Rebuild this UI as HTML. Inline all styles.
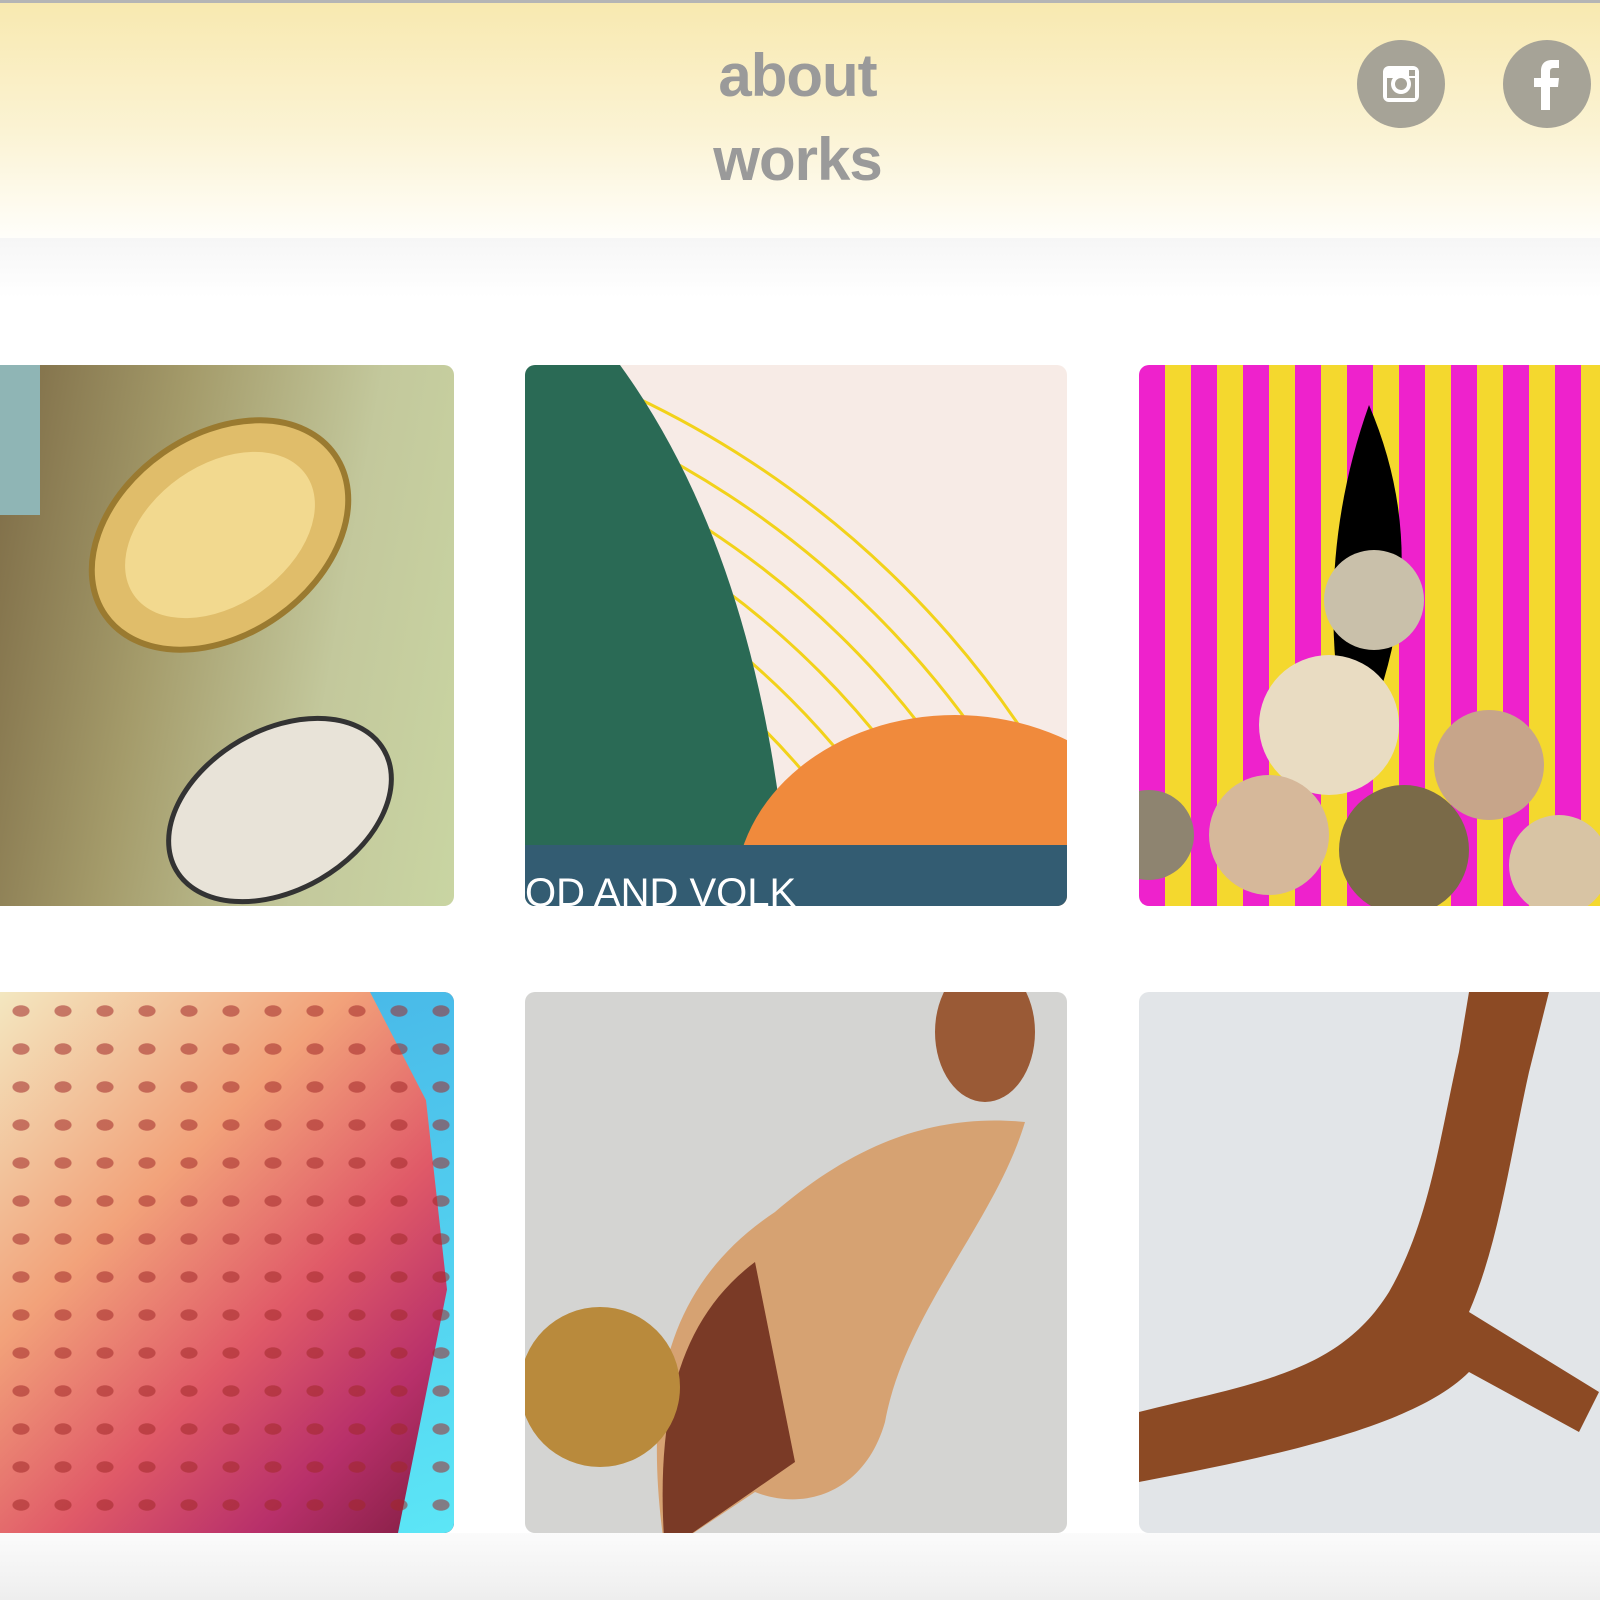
<!DOCTYPE html>
<html><head><meta charset="utf-8"><style>
*{margin:0;padding:0;box-sizing:border-box}
html{width:1600px;height:1600px;overflow:hidden}
body{width:1600px;height:1600px;overflow:hidden;background:#fff;position:relative;font-family:"Liberation Sans",sans-serif}
.top{position:absolute;left:0;top:0;width:1600px;height:3px;background:#b5b5b5}
.hdr{position:absolute;left:0;top:3px;width:1600px;height:235px;background:linear-gradient(#f8e9b0,#fbf3d4 55%,#fffefa)}
.band{position:absolute;left:0;top:238px;width:1600px;height:60px;background:linear-gradient(#f6f6f6,#fff)}
.nav{position:absolute;left:700px;width:195px;text-align:center;font-size:60px;font-weight:bold;color:#9a9a9a;letter-spacing:-1px;line-height:60px}
.c{position:absolute;width:88px;height:88px;border-radius:50%;background:#a6a397;top:40px}
.t{position:absolute;overflow:hidden;border-radius:10px}
.foot{position:absolute;left:0;top:1533px;width:1600px;height:67px;background:linear-gradient(#fbfbfb,#eeeeee)}
</style></head><body>
<div class="top"></div>
<div class="hdr"></div>
<div class="band"></div>
<div class="nav" style="top:46px">about</div>
<div class="nav" style="top:130px">works</div>
<div class="c" style="left:1357px"><svg width="88" height="88" viewBox="0 0 88 88"><rect x="26" y="26" width="36" height="36" rx="6" fill="#fff"/><rect x="30" y="38" width="28" height="20" fill="#a6a397"/><circle cx="44" cy="44" r="10" fill="#fff"/><circle cx="44" cy="44" r="6" fill="#a6a397"/><rect x="52" y="30" width="6" height="6" fill="#a6a397"/></svg></div>
<div class="c" style="left:1503px"><svg width="88" height="88" viewBox="0 0 88 88"><path d="M47 70V47h8l1-9h-9v-6c0-3 1-4 4-4h5v-8h-7c-8 0-11 5-11 11v7h-7v9h7v23z" fill="#fff"/></svg></div>

<div class="t" style="left:0;top:365px;width:454px;height:541px;border-radius:0 10px 10px 0;background:linear-gradient(100deg,#7d6b46 0%,#a49b6a 35%,#c3c89c 70%,#c9d5a2 100%)">
<svg width="454" height="541"><ellipse cx="220" cy="170" rx="140" ry="100" transform="rotate(-35 220 170)" fill="#e0bd6a" stroke="#9a7a30" stroke-width="6"/><ellipse cx="220" cy="170" rx="105" ry="70" transform="rotate(-35 220 170)" fill="#f2d98f"/><ellipse cx="280" cy="445" rx="120" ry="80" transform="rotate(-30 280 445)" fill="#e8e3d8" stroke="#333" stroke-width="5"/><rect x="0" y="0" width="40" height="150" fill="#8fb5b5"/></svg></div>

<div class="t" style="left:525px;top:365px;width:542px;height:541px;background:#f7ebe6">
<svg width="542" height="541"><g fill="none" stroke="#f2d21a" stroke-width="3"><circle cx="-300" cy="900" r="440"/><circle cx="-300" cy="900" r="480"/><circle cx="-300" cy="900" r="520"/><circle cx="-300" cy="900" r="560"/><circle cx="-300" cy="900" r="600"/><circle cx="-300" cy="900" r="640"/><circle cx="-300" cy="900" r="680"/><circle cx="-300" cy="900" r="720"/><circle cx="-300" cy="900" r="760"/><circle cx="-300" cy="900" r="800"/><circle cx="-300" cy="900" r="840"/><circle cx="-300" cy="900" r="880"/><circle cx="-300" cy="900" r="920"/><circle cx="-300" cy="900" r="960"/></g><path d="M0 0H95Q240 200 265 541H0z" fill="#2a6a55"/><ellipse cx="430" cy="530" rx="220" ry="180" fill="#f08a3c"/><rect x="0" y="480" width="542" height="61" fill="#335c72"/><text x="0" y="541" font-size="40" fill="#fff" font-family="Liberation Sans">OD AND VOLK</text></svg></div>

<div class="t" style="left:1139px;top:365px;width:461px;height:541px;border-radius:10px 0 0 10px;background:repeating-linear-gradient(90deg,#ee22cc 0 26px,#f4d82e 26px 52px)">
<svg width="461" height="541"><path d="M230 40Q290 180 240 330L200 330Q180 180 230 40z" fill="#000"/><circle cx="235" cy="235" r="50" fill="#c9c0aa"/><circle cx="190" cy="360" r="70" fill="#e9dcc2"/><circle cx="130" cy="470" r="60" fill="#d6b89a"/><circle cx="265" cy="485" r="65" fill="#7a6a48"/><circle cx="350" cy="400" r="55" fill="#c7a58a"/><circle cx="420" cy="500" r="50" fill="#d8c4a4"/><circle cx="10" cy="470" r="45" fill="#8e8470"/></svg></div>

<div class="t" style="left:0;top:992px;width:454px;height:541px;border-radius:0 10px 10px 0;background:linear-gradient(135deg,#f3e7c0 0%,#f2a27a 35%,#e05a68 60%,#b8306a 80%,#7e1c40 100%)">
<div style="position:absolute;right:0;top:0;width:140px;height:541px;background:linear-gradient(160deg,#48b8e8,#5ce6f6);clip-path:polygon(40% 0,100% 0,100% 100%,60% 100%,95% 55%,80% 20%)"></div>
<div style="position:absolute;inset:0;background:radial-gradient(ellipse 9px 6px,rgba(160,40,40,.55) 90%,transparent 100%) 0 0/42px 38px"></div></div>

<div class="t" style="left:525px;top:992px;width:542px;height:541px;background:#d4d4d2">
<svg width="542" height="541"><ellipse cx="460" cy="40" rx="50" ry="70" fill="#9a5a36"/><path d="M140 560C120 420 130 300 250 220C320 160 400 120 500 130C470 230 380 320 360 430C340 500 280 520 230 500z" fill="#d6a272"/><path d="M140 560C130 430 150 330 230 270L270 470z" fill="#7a3a26"/><circle cx="75" cy="395" r="80" fill="#b98a3c"/></svg></div>

<div class="t" style="left:1139px;top:992px;width:461px;height:541px;border-radius:10px 0 0 10px;background:#e2e5e8">
<svg width="461" height="541"><path d="M0 420C120 390 200 380 250 300C290 230 300 150 320 60L330 0H410L390 80C370 170 360 250 330 320L460 400L440 440L330 380C280 430 160 460 0 490z" fill="#8c4a24"/></svg></div>

<div class="foot"></div>
</body></html>
